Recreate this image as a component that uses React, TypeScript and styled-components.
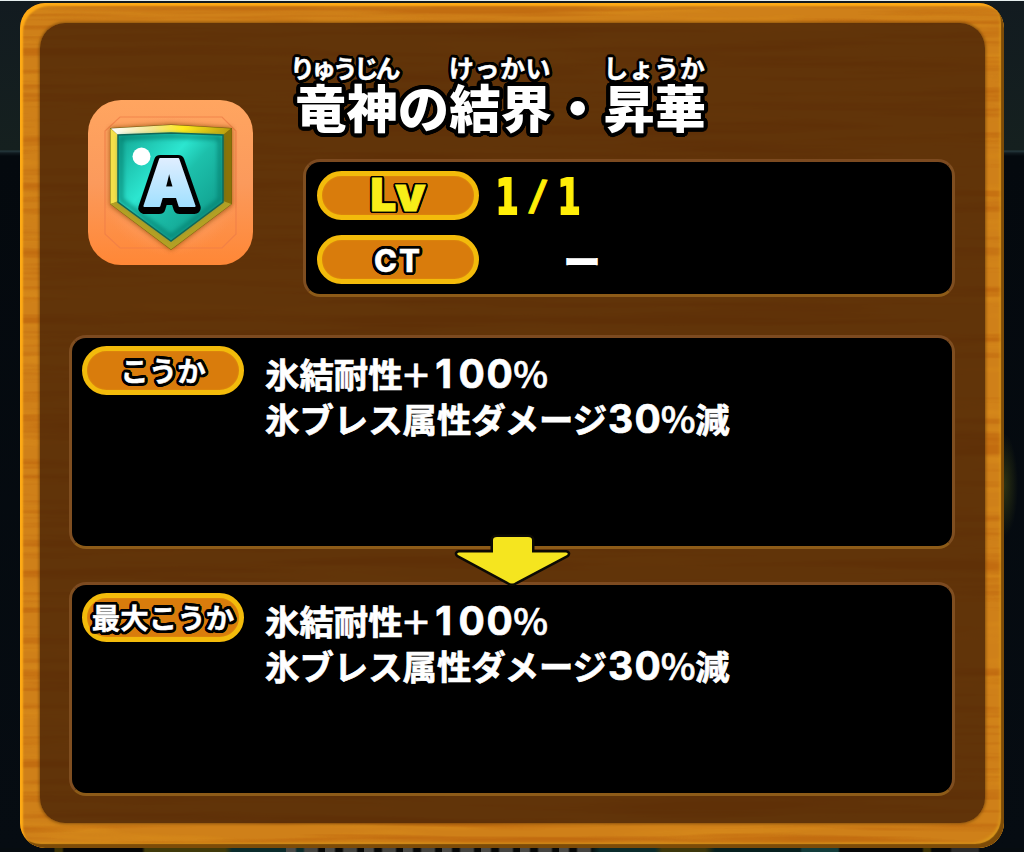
import React from 'react'
import styled, { createGlobalStyle } from 'styled-components'

// ring of shadows, gives the lettering a rounded outline
const outline = (radius: number) =>
    Array.from({ length: 24 }, (_, i) => {
        const angle = (i / 24) * Math.PI * 2
        return `${(Math.cos(angle) * radius).toFixed(2)}px ${(Math.sin(angle) * radius).toFixed(2)}px 0 #000`
    }).join(', ')

const GlobalStyle = createGlobalStyle`
    * {
        box-sizing: border-box;
    }

    body {
        margin: 0;
        overflow: hidden;
        font-family: 'Noto Sans CJK JP', sans-serif;
        color: #fff;
    }
`

const Screen = styled.div`
    position: relative;
    width: 1024px;
    height: 852px;
    padding: 2px 20px 4px;
    border-top: 1px solid #e6eeee;
    overflow: hidden;
    background:
        radial-gradient(ellipse 14px 52px at 1004px 484px, #2c3212, transparent),
        linear-gradient(#121b20, #15201f 149px, #263a3f 150px, #101a1f 152px, #04090e 155px, #060c12);
`

const Behind = styled.div`
    position: absolute;
    left: 0;
    right: 0;
    bottom: 0;
    height: 4px;
    background:
        repeating-linear-gradient(90deg, #4b4b48 0 9px, transparent 11px 17px, #444441 19px 31px, transparent 33px 39px)
            286px 0 / 312px 4px no-repeat,
        linear-gradient(
            90deg,
            #060c10 54px,
            #3c3206 55px 62px,
            #050606 64px 142px,
            #403a0a 145px 225px,
            #0b2c2c 232px 306px,
            #060808 312px 590px,
            #0b2c2c 600px 655px,
            #3c370c 662px 705px,
            #07201f 715px 800px,
            #123c3b 802px 838px,
            #060808 840px 922px,
            #3c3206 924px 930px,
            #060808 932px 950px,
            #2a2a2a 952px 978px,
            #060c10 980px
        );
`

const Board = styled.div`
    position: relative;
    height: 845px;
    padding: 20px 19px 25px 20px;
    border-radius: 25px;
    overflow: hidden;
    background: #cf8019;
`

const Bevel = styled.div`
    position: absolute;
    inset: 0;
    border-radius: 25px;
    box-shadow:
        inset 4px 4px 2px -1px #ffab16,
        inset -4px -5px 1px -1px #7c4b08,
        inset -7px -8px 3px -3px #dc9a1c;
    pointer-events: none;
`

const Grain = styled.svg`
    position: absolute;
    inset: 0;
    width: 100%;
    height: 100%;
    pointer-events: none;
`

const Inner = styled.div`
    position: relative;
    height: 800px;
    padding: 29px 30px 0 29px;
    border-radius: 25px;
    background: rgba(74, 36, 6, 0.83);
    box-shadow: 0 0 3px 1px rgba(110, 62, 8, 0.7);
`

const Header = styled.div`
    display: flex;
    height: 283px;
    padding-left: 19px;
`

const Badge = styled.svg`
    flex: none;
    width: 165px;
    height: 165px;
    margin-top: 48px;
`

const Info = styled.div`
    flex: 1;
    padding-left: 50px;
`

const Title = styled.h1`
    display: flex;
    align-items: flex-end;
    height: 81px;
    margin: 0 0 26px -8px;
    font-weight: 900;
    text-shadow: ${outline(4)};
`

const Word = styled.span<{ $chars: number }>`
    display: flex;
    flex-direction: column;
    align-items: center;
    width: ${(p) => p.$chars * 51.4}px;
    font-size: 51.4px;
    line-height: 54px;
    white-space: nowrap;
`

const Reading = styled.span<{ $tight?: boolean }>`
    position: relative;
    z-index: 1;
    margin-left: ${(p) => (p.$tight ? '-6px' : '-1px')};
    font-size: 25px;
    font-weight: 700;
    line-height: 24px;
    letter-spacing: ${(p) => (p.$tight ? '-3.6px' : '0.5px')};
    -webkit-text-stroke: 0.5px #fff;
    text-shadow: ${outline(3)};
`

const Panel = styled.section<{ $height: number }>`
    height: ${(p) => p.$height}px;
    border: 3px solid;
    border-color: #7c4a20 #7f4e20 #8d5b18 #7f4e20;
    border-radius: 17px;
    background: #000;
`

const Stats = styled(Panel)`
    display: flex;
    flex-direction: column;
    gap: 15px;
    padding: 9px 11px;
`

const StatRow = styled.div`
    display: flex;
    align-items: center;
    height: 49px;
`

const Effect = styled(Panel)`
    display: flex;
    gap: 21px;
    padding: 8px 10px;
`

const Pill = styled.div`
    display: flex;
    flex: none;
    align-items: center;
    justify-content: center;
    width: 162px;
    height: 49px;
    border: 5px solid #f3bb0b;
    border-radius: 25px;
    background: #d97c0c;
    box-shadow: inset 0 0 2px #e39a10;
    font-size: 28.5px;
    font-weight: 700;
    line-height: 1;
    white-space: nowrap;
    -webkit-text-stroke: 0.4px #fff;
    text-shadow: ${outline(3)};
`

const LevelText = styled.span<{ $small?: boolean }>`
    margin: ${(p) => (p.$small ? '-4px 0 0 -1px' : '-4px 0 0')};
    font-family: Inter, sans-serif;
    font-size: ${(p) => (p.$small ? 48 : 46)}px;
    font-weight: 900;
    color: #f8ee18;
    -webkit-text-stroke: 0.8px #f8ee18;
    text-shadow: ${outline(2.3)};
`

const CtText = styled.span`
    margin-top: 2px;
    font-family: Inter, sans-serif;
    font-size: 31px;
    font-weight: 800;
    letter-spacing: 2px;
`

const Level = styled.div`
    display: flex;
    align-items: center;
    margin: 4px 0 0 16px;
    font-family: 'DejaVu Sans', sans-serif;
    font-size: 49px;
    font-weight: 700;
    line-height: 49px;
    color: #ffee08;
`

const LevelOne = styled.span`
    display: flex;
    justify-content: center;
    width: 24px;
    transform: scaleX(0.68);
    -webkit-text-stroke: 2px #ffee08;
`

const LevelSlash = styled.span`
    display: flex;
    justify-content: center;
    width: 38px;
    margin-top: -5px;
    font-size: 42px;
    transform: rotate(5deg);
    -webkit-text-stroke: 1px #ffee08;
`

const Dash = styled.span`
    margin-left: 84px;
    font-size: 38px;
    font-weight: 900;
    line-height: 49px;
`

const Lines = styled.div`
    padding-top: 5px;
`

const Line = styled.p`
    display: flex;
    height: 45px;
    margin: 0;
    font-size: 34.4px;
    font-weight: 700;
    line-height: 45px;
    white-space: nowrap;
    -webkit-text-stroke: 0.7px #fff;
`

const Digit = styled.span<{ $width?: number }>`
    display: flex;
    justify-content: center;
    width: ${(p) => p.$width ?? 27}px;
    font-family: Inter, sans-serif;
    font-size: 39px;
`

const Plus = styled.span`
    display: flex;
    justify-content: center;
    width: 27px;
    margin-top: -1px;
    font-size: 46px;
    font-weight: 400;
`

const Percent = styled.span<{ $width: number }>`
    display: flex;
    justify-content: center;
    width: ${(p) => p.$width}px;
    margin-top: -1px;
    font-size: 37px;
    font-weight: 500;
`

const Arrow = styled.svg`
    position: relative;
    display: block;
    width: 120px;
    height: 54px;
    margin: -16px 0 -5px 383px;
`

const WoodGrain = () => (
    <Grain>
        <filter id="grain" x="0" y="0" width="100%" height="100%" colorInterpolationFilters="sRGB">
            <feTurbulence type="fractalNoise" baseFrequency="0.0035 0.09" numOctaves="3" seed="8" />
            <feColorMatrix
                values="0 0 0 0 0.66
                        0 0 0 0 0.27
                        0 0 0 0 0
                        4 0 0 0 -1.9"
            />
        </filter>
        <filter id="light" x="0" y="0" width="100%" height="100%" colorInterpolationFilters="sRGB">
            <feTurbulence type="fractalNoise" baseFrequency="0.005 0.06" numOctaves="3" seed="21" />
            <feColorMatrix
                values="0 0 0 0 0.93
                        0 0 0 0 0.65
                        0 0 0 0 0.13
                        4 0 0 0 -2"
            />
        </filter>
        <rect width="100%" height="100%" filter="url(#light)" opacity="0.2" />
        <rect width="100%" height="100%" filter="url(#grain)" opacity="0.32" />
    </Grain>
)

const RankBadge = () => (
    <Badge viewBox="88 100 165 165">
        <defs>
            <linearGradient id="tile" x1="0" y1="0" x2="0" y2="1">
                <stop offset="0" stopColor="#ffa560" />
                <stop offset="0.5" stopColor="#fb9a5c" />
                <stop offset="1" stopColor="#ff8736" />
            </linearGradient>
            <radialGradient id="glow">
                <stop offset="0.6" stopColor="#ffb184" />
                <stop offset="1" stopColor="#fb9a5c" stopOpacity="0" />
            </radialGradient>
            <linearGradient id="gem" x1="0" y1="0" x2="1" y2="0.9">
                <stop offset="0" stopColor="#12a592" />
                <stop offset="0.4" stopColor="#2ce6d0" />
                <stop offset="0.55" stopColor="#1dc0ab" />
                <stop offset="1" stopColor="#0c9585" />
            </linearGradient>
            <linearGradient id="letter" x1="0" y1="0" x2="0" y2="1">
                <stop offset="0.1" stopColor="#e8f0ff" />
                <stop offset="1" stopColor="#8edcff" />
            </linearGradient>
            <linearGradient id="top" x1="0" y1="0" x2="1" y2="0">
                <stop offset="0" stopColor="#fff" />
                <stop offset="0.35" stopColor="#f4e68c" />
                <stop offset="0.6" stopColor="#ffe91c" />
                <stop offset="1" stopColor="#b99b0d" />
            </linearGradient>
            <filter id="soft">
                <feGaussianBlur stdDeviation="2.5" />
            </filter>
        </defs>
        <rect x="88" y="100" width="165" height="165" rx="33" fill="url(#tile)" />
        <circle cx="171" cy="184" r="72" fill="url(#glow)" opacity="0.6" />
        <path
            d="M120 117H222L236 131V234L222 248H120L105 234V131Z"
            fill="none"
            stroke="#ef7e47"
            strokeWidth="1.2"
            opacity="0.8"
        />
        <path d="M110 128L171 124L232 128V205L171 250L110 205Z" fill="#8a4a10" filter="url(#soft)" opacity="0.8" />
        <path d="M110 128L171 124.5L232 128V204L171 250L110 204Z" fill="#74610c" />
        <path d="M110.5 128.5L118 135V202L110.5 204Z" fill="#f5e049" />
        <path d="M231.5 128.5L223 135V202L231.5 204Z" fill="#8b7308" />
        <path d="M111 128.5L171 125L231 128.5L223 135L171 133L118 135Z" fill="url(#top)" />
        <path d="M110.5 204L118 201L171 241L223 201L231.5 204L171 249.5Z" fill="#b3a024" />
        <path d="M118 135L171 133L223 135V202L171 241L118 202Z" fill="url(#gem)" stroke="#146457" strokeWidth="1.5" />
        <path d="M121 138L171 136L220 138V200L171 237L121 200Z" fill="none" stroke="#087565" strokeWidth="3" filter="url(#soft)" />
        <circle cx="141.5" cy="156.5" r="9" fill="#fff" />
        <g fontFamily="Inter" fontWeight="900" fontSize="64" strokeLinejoin="round">
            <text x="143" y="208" textLength="53" lengthAdjust="spacingAndGlyphs" fill="#000" stroke="#000" strokeWidth="12">
                A
            </text>
            <text x="143" y="206" textLength="53" lengthAdjust="spacingAndGlyphs" fill="url(#letter)" stroke="url(#letter)" strokeWidth="2">
                A
            </text>
        </g>
    </Badge>
)

const DownArrow = () => (
    <Arrow viewBox="452 533 120 54">
        <path
            d="M493 540Q493 537 497 537H528Q532 537 532 540V552.5H566Q569 553 567 555L516 582Q512 585 508 582L458 555Q456 553 459 552.5H493Z"
            fill="#f5e51f"
            stroke="#0c0a04"
            strokeWidth="5"
            strokeLinejoin="round"
            paintOrder="stroke"
        />
    </Arrow>
)

const EffectPanel = ({ label, height }: { label: string; height: number }) => (
    <Effect $height={height}>
        <Pill>{label}</Pill>
        <Lines>
            <Line>
                氷結耐性<Plus>+</Plus>
                <Digit $width={28}>1</Digit>
                <Digit $width={28}>0</Digit>
                <Digit $width={28}>0</Digit>
                <Percent $width={34}>%</Percent>
            </Line>
            <Line>
                氷ブレス属性ダメージ
                <Digit>3</Digit>
                <Digit>0</Digit>
                <Percent $width={34}>%</Percent>減
            </Line>
        </Lines>
    </Effect>
)

export default function App() {
    return (
        <Screen>
            <GlobalStyle />
            <Behind />
            <Board>
                <WoodGrain />
                <Bevel />
                <Inner>
                    <Header>
                        <RankBadge />
                        <Info>
                            <Title>
                                <Word $chars={2}>
                                    <Reading $tight>りゅうじん</Reading>竜神
                                </Word>
                                <Word $chars={1}>の</Word>
                                <Word $chars={2}>
                                    <Reading>けっかい</Reading>結界
                                </Word>
                                <Word $chars={1}>・</Word>
                                <Word $chars={2}>
                                    <Reading>しょうか</Reading>昇華
                                </Word>
                            </Title>
                            <Stats $height={138}>
                                <StatRow>
                                    <Pill>
                                        <LevelText>L</LevelText>
                                        <LevelText $small>v</LevelText>
                                    </Pill>
                                    <Level>
                                        <LevelOne>1</LevelOne>
                                        <LevelSlash>/</LevelSlash>
                                        <LevelOne>1</LevelOne>
                                    </Level>
                                </StatRow>
                                <StatRow>
                                    <Pill>
                                        <CtText>CT</CtText>
                                    </Pill>
                                    <Dash>ー</Dash>
                                </StatRow>
                            </Stats>
                        </Info>
                    </Header>
                    <EffectPanel label="こうか" height={214} />
                    <DownArrow />
                    <EffectPanel label="最大こうか" height={214} />
                </Inner>
            </Board>
        </Screen>
    )
}
